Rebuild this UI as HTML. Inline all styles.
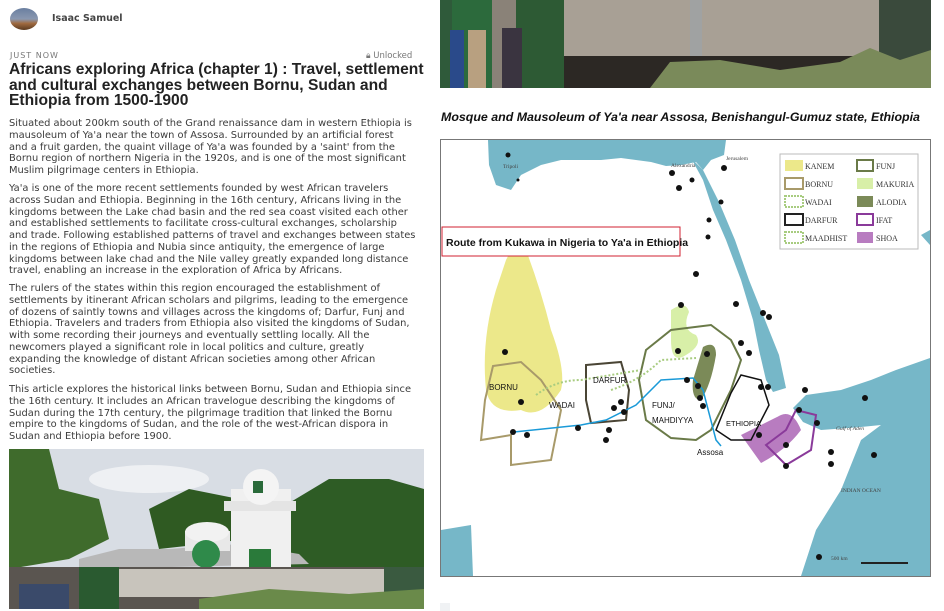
<!DOCTYPE html>
<html><head><meta charset="utf-8"><style>
*{margin:0;padding:0;box-sizing:border-box}
body{width:944px;height:611px;overflow:hidden;background:#fff;font-family:"DejaVu Sans",sans-serif;position:relative;color:#333}
.abs{position:absolute}
.p{position:absolute;left:9px;font-size:9.9px;line-height:11.75px;color:#3c3c3c;white-space:nowrap}
</style></head><body>
<div class="abs" style="left:10px;top:8px;width:28px;height:22px;border-radius:50%;background:linear-gradient(#6a7fa0 0,#8a98b0 50%,#a06a40 70%,#5a3a20 100%)"></div>
<div class="abs" style="left:52px;top:13px;font-size:9.5px;font-weight:bold;color:#444">Isaac Samuel</div>
<div class="abs" style="left:10px;top:51px;font-size:8px;letter-spacing:1px;color:#777">JUST NOW</div>
<div class="abs" style="left:366px;top:51px;font-size:8.5px;color:#777">🔒︎ Unlocked</div>
<div class="abs" style="left:9px;top:62px;font-family:'Liberation Sans',sans-serif;font-size:15.6px;line-height:15.6px;font-weight:bold;color:#222;white-space:nowrap">Africans exploring Africa (chapter 1) : Travel, settlement<br>and cultural exchanges between Bornu, Sudan and<br>Ethiopia from 1500-1900</div>
<div class="p" style="top:118px">Situated about 200km south of the Grand renaissance dam in western Ethiopia is<br>mausoleum of Ya'a near the town of Assosa. Surrounded by an artificial forest<br>and a fruit garden, the quaint village of Ya'a was founded by a 'saint' from the<br>Bornu region of northern Nigeria in the 1920s, and is one of the most significant<br>Muslim pilgrimage centers in Ethiopia.</div>
<div class="p" style="top:183px">Ya'a is one of the more recent settlements founded by west African travelers<br>across Sudan and Ethiopia. Beginning in the 16th century, Africans living in the<br>kingdoms between the Lake chad basin and the red sea coast visited each other<br>and established settlements to facilitate cross-cultural exchanges, scholarship<br>and trade. Following established patterns of travel and exchanges between states<br>in the regions of Ethiopia and Nubia since antiquity, the emergence of large<br>kingdoms between lake chad and the Nile valley greatly expanded long distance<br>travel, enabling an increase in the exploration of Africa by Africans.</div>
<div class="p" style="top:283px">The rulers of the states within this region encouraged the establishment of<br>settlements by itinerant African scholars and pilgrims, leading to the emergence<br>of dozens of saintly towns and villages across the kingdoms of; Darfur, Funj and<br>Ethiopia. Travelers and traders from Ethiopia also visited the kingdoms of Sudan,<br>with some recording their journeys and eventually settling locally. All the<br>newcomers played a significant role in local politics and culture, greatly<br>expanding the knowledge of distant African societies among other African<br>societies.</div>
<div class="p" style="top:384px">This article explores the historical links between Bornu, Sudan and Ethiopia since<br>the 16th century. It includes an African travelogue describing the kingdoms of<br>Sudan during the 17th century, the pilgrimage tradition that linked the Bornu<br>empire to the kingdoms of Sudan, and the role of the west-African dispora in<br>Sudan and Ethiopia before 1900.</div>

<svg class="abs" style="left:9px;top:449px" width="415" height="160" viewBox="0 0 415 160">
<rect width="415" height="160" fill="#d8dde4"/>
<ellipse cx="140" cy="30" rx="60" ry="14" fill="#eef0f3"/>
<path d="M0 0H40L50 40 90 50 100 90 60 110 0 120Z" fill="#3f6b2c"/>
<path d="M140 60 180 40 230 50 240 90 150 100Z" fill="#2f5a22"/>
<path d="M270 60 320 30 380 30 415 40V120H280Z" fill="#2e5c25"/>
<path d="M70 110 110 100 160 100 230 95 290 105 300 115 70 120Z" fill="#b8b8b8"/>
<rect x="176" y="82" width="45" height="20" fill="#e8e8e8"/>
<ellipse cx="198" cy="83" rx="22" ry="10" fill="#f2f2f2"/>
<rect x="222" y="40" width="60" height="80" fill="#f0f0f0"/>
<rect x="215" y="52" width="72" height="10" fill="#e4e4e4"/>
<ellipse cx="252" cy="38" rx="18" ry="18" fill="#f4f4f4"/>
<rect x="244" y="32" width="10" height="12" fill="#2a6a3a"/>
<rect x="240" y="100" width="22" height="20" fill="#2a7a3a"/>
<circle cx="197" cy="105" r="14" fill="#2f8a4a"/>
<rect x="0" y="118" width="415" height="42" fill="#5a5550"/>
<rect x="110" y="120" width="270" height="28" fill="#c8c4bc"/>
<rect x="70" y="118" width="40" height="42" fill="#2a5a30"/>
<rect x="375" y="118" width="40" height="35" fill="#3a5a40"/>
<rect x="10" y="135" width="50" height="25" fill="#3a4a6a"/>
<path d="M190 150 260 140 340 145 415 140V160H190Z" fill="#6a8a4a"/>
</svg>

<svg class="abs" style="left:440px;top:0" width="491" height="88" viewBox="0 0 491 88">
<rect width="491" height="88" fill="#8a8278"/>
<rect x="0" width="12" height="88" fill="#2f5a3a"/>
<rect x="12" width="40" height="88" fill="#2c6a3c"/>
<rect x="76" width="48" height="88" fill="#2d5a34"/>
<rect x="124" y="0" width="315" height="56" fill="#a8a095"/>
<rect x="250" y="0" width="12" height="56" fill="#a0a2a2"/>
<rect x="124" y="56" width="315" height="32" fill="#2c2824"/>
<rect x="439" y="0" width="52" height="88" fill="#3a4a3c"/>
<rect x="10" y="30" width="14" height="58" fill="#2a4a8a"/>
<rect x="28" y="30" width="18" height="58" fill="#b8a080"/>
<rect x="62" y="28" width="20" height="60" fill="#3a3440"/>
<path d="M210 88 230 62 280 60 340 70 400 62 430 48 460 60 491 50V88Z" fill="#7a8a5a"/>
</svg>
<div class="abs" style="left:441px;top:110px;font-family:'Liberation Sans',sans-serif;font-size:12.4px;font-weight:bold;font-style:italic;color:#111;white-space:nowrap">Mosque and Mausoleum of Ya'a near Assosa, Benishangul-Gumuz state, Ethiopia</div>

<svg class="abs" style="left:440px;top:139px;border:1px solid #777" width="491" height="438" viewBox="0 0 489 436" font-family="Liberation Serif,serif">
<rect width="489" height="436" fill="#fff"/>
<g fill="#76b7c8">
<path d="M47 0H285L283 15 270 20 262 30 255 22 240 25 225 26 210 22 180 18 160 20 120 20 100 25 80 35 70 50 55 45 48 25Z"/>
<path d="M250 18 262 40 272 70 285 100 300 140 312 180 318 210 325 240 332 252 345 248 338 215 322 175 308 140 294 100 278 62 262 30Z"/>
<path d="M352 268 365 255 400 250 430 240 455 230 489 218V436H360L375 390 400 350 420 300 440 285 420 287 380 290 362 282Z"/>
<path d="M480 95 489 90V105Z"/>
<path d="M0 390 30 385 32 436H0Z"/>
</g>
<path d="M65 120 Q75 100 85 110 Q100 150 110 190 Q125 230 120 250 Q100 280 80 270 Q50 275 45 250 Q40 200 55 150Z" fill="#ece88a"/>
<path d="M230 170 Q245 160 248 172 240 190 255 195 262 205 245 215 230 225 230 200Z" fill="#d8efa8"/>
<path d="M262 207 Q275 200 275 215 270 245 260 260 250 260 252 240Z" fill="#7b8a58"/>
<path d="M300 295 Q330 280 340 275 352 270 360 290 345 310 320 323 300 320Z" fill="#b87cc0"/>
<g fill="none" stroke-width="2">
<path d="M52 226 80 222 100 240 120 270 110 320 70 325 70 295 40 300 44 260Z" stroke="#a89a6a"/>
<path d="M145 225 180 222 188 250 185 280 150 283 145 260Z" stroke="#4a4535"/>
<path d="M205 210 230 190 270 185 290 200 300 220 290 250 270 290 255 300 230 298 205 280 198 240Z" stroke="#6a7a48"/>
<path d="M290 253 300 235 320 240 328 265 310 300 290 300 275 290Z" stroke="#111" stroke-width="1.5"/>
<path d="M325 305 345 290 355 270 375 275 370 310 345 325Z" stroke="#8a3a9a"/>
</g>
<path d="M95 255 Q115 240 140 240 L200 230 M170 250 Q200 240 220 220 L255 218" stroke="#a8cc80" stroke-dasharray="2,2" fill="none" stroke-width="2"/>
<path d="M73 292 L140 285 L165 280 L195 265 L220 240 L252 238 L262 250 L275 300 L280 306" stroke="#1a9ad8" stroke-width="1.5" fill="none"/>
<g fill="#111">
<circle cx="67" cy="15" r="2.5"/><circle cx="77" cy="40" r="1.5"/><circle cx="231" cy="33" r="3"/><circle cx="238" cy="48" r="3"/><circle cx="283" cy="28" r="3"/><circle cx="251" cy="40" r="2.5"/><circle cx="280" cy="62" r="2.5"/><circle cx="268" cy="80" r="2.5"/><circle cx="267" cy="97" r="2.5"/><circle cx="255" cy="134" r="3"/><circle cx="240" cy="165" r="3"/><circle cx="295" cy="164" r="3"/><circle cx="322" cy="173" r="3"/><circle cx="328" cy="177" r="3"/><circle cx="300" cy="203" r="3"/><circle cx="308" cy="213" r="3"/><circle cx="237" cy="211" r="3"/><circle cx="266" cy="214" r="3"/><circle cx="246" cy="240" r="3"/><circle cx="257" cy="246" r="3"/><circle cx="259" cy="258" r="3"/><circle cx="262" cy="266" r="3"/><circle cx="64" cy="212" r="3"/><circle cx="80" cy="262" r="3"/><circle cx="72" cy="292" r="3"/><circle cx="86" cy="295" r="3"/><circle cx="137" cy="288" r="3"/><circle cx="180" cy="262" r="3"/><circle cx="173" cy="268" r="3"/><circle cx="183" cy="272" r="3"/><circle cx="168" cy="290" r="3"/><circle cx="165" cy="300" r="3"/><circle cx="320" cy="247" r="3"/><circle cx="327" cy="247" r="3"/><circle cx="364" cy="250" r="3"/><circle cx="358" cy="270" r="3"/><circle cx="376" cy="283" r="3"/><circle cx="390" cy="312" r="3"/><circle cx="390" cy="324" r="3"/><circle cx="424" cy="258" r="3"/><circle cx="433" cy="315" r="3"/><circle cx="378" cy="417" r="3"/><circle cx="318" cy="295" r="3"/><circle cx="345" cy="305" r="3"/><circle cx="345" cy="326" r="3"/>
</g>
<rect x="339" y="14" width="138" height="95" fill="#fff" stroke="#bbb"/>
<g font-size="8" fill="#333">
<rect x="344" y="20" width="18" height="11" fill="#ece88a"/><text x="364" y="29">KANEM</text>
<rect x="344" y="38" width="18" height="11" fill="none" stroke="#a89a6a" stroke-width="2"/><text x="364" y="47">BORNU</text>
<rect x="344" y="56" width="18" height="11" fill="none" stroke="#a8cc80" stroke-dasharray="2,1" stroke-width="2"/><text x="364" y="65">WADAI</text>
<rect x="344" y="74" width="18" height="11" fill="none" stroke="#222" stroke-width="2"/><text x="364" y="83">DARFUR</text>
<rect x="344" y="92" width="18" height="11" fill="none" stroke="#a8cc80" stroke-dasharray="2,1" stroke-width="2"/><text x="364" y="101">MAADHIST</text>
<rect x="416" y="20" width="16" height="11" fill="none" stroke="#6a7a48" stroke-width="2"/><text x="435" y="29">FUNJ</text>
<rect x="416" y="38" width="16" height="11" fill="#d8efa8"/><text x="435" y="47">MAKURIA</text>
<rect x="416" y="56" width="16" height="11" fill="#7b8a58"/><text x="435" y="65">ALODIA</text>
<rect x="416" y="74" width="16" height="11" fill="none" stroke="#8a3a9a" stroke-width="2"/><text x="435" y="83">IFAT</text>
<rect x="416" y="92" width="16" height="11" fill="#b87cc0"/><text x="435" y="101">SHOA</text>
</g>
<rect x="1" y="87" width="238" height="29" fill="#fff" stroke="#d02030" stroke-width="1"/>
<g font-family="Liberation Sans,sans-serif" fill="#111">
<text x="5" y="106" font-size="10.5" font-weight="bold">Route from Kukawa in Nigeria to Ya'a in Ethiopia</text>
<text x="48" y="250" font-size="8">BORNU</text><text x="108" y="268" font-size="8">WADAI</text><text x="152" y="243" font-size="8">DARFUR</text>
<text x="211" y="268" font-size="8">FUNJ/</text><text x="211" y="283" font-size="8">MAHDIYYA</text><text x="285" y="286" font-size="7.5">ETHIOPIA</text><text x="256" y="315" font-size="8">Assosa</text>
</g>
<g font-size="5.5" fill="#444"><text x="62" y="28">Tripoli</text><text x="230" y="27">Alexandria</text><text x="285" y="20">Jerusalem</text><text x="400" y="352">INDIAN OCEAN</text><text x="395" y="290" font-style="italic">Gulf of Aden</text><text x="390" y="420">500 km</text></g>
<path d="M420 423H467" stroke="#222" stroke-width="2"/>
</svg>
<div class="abs" style="left:440px;top:603px;width:10px;height:8px;background:#f0f2f4"></div>
</body></html>
